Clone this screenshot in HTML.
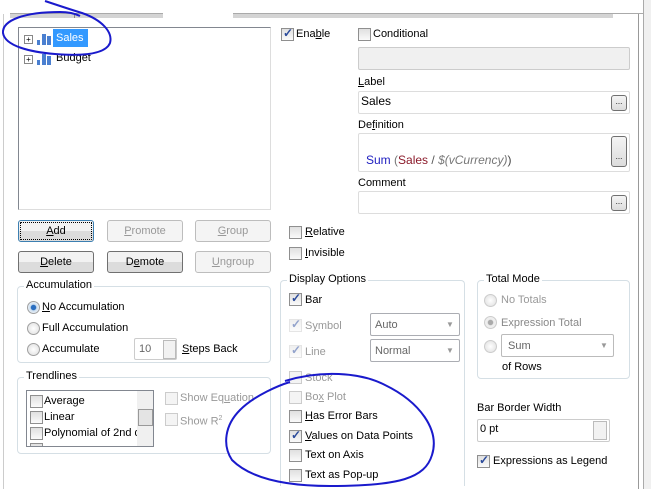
<!DOCTYPE html><html><head><style>
html,body{margin:0;width:651px;height:489px;overflow:hidden}
body{background:#fff;position:relative;font-family:"Liberation Sans",sans-serif;font-size:11px;color:#000}
.a{position:absolute}
.t{position:absolute;white-space:nowrap;line-height:16px}
.cb{position:absolute;width:11px;height:11px;border:1px solid #8f8f8f;background:linear-gradient(#e0e0e0,#fafafa)}
.ck::after{content:"✓";position:absolute;left:1px;top:-3px;font-size:12px;color:#2a4a9a;font-weight:bold}
.dis{color:#999}
.btn{position:absolute;height:20px;border:1px solid #707070;border-radius:3px;background:linear-gradient(#f2f2f2 50%,#dcdcdc 50%);text-align:center;line-height:20px}
.btn.d{border-color:#bdbdbd;background:#f4f4f4;color:#999}
.grp{position:absolute;border:1px solid #d5dfe5;border-radius:4px}
.gl{position:absolute;top:-8px;left:6px;background:#fff;padding:0 2px}
.inp{position:absolute;border:1px solid #abadb3;border-radius:2px;background:#fff}
.rad{position:absolute;width:11px;height:11px;border-radius:50%;border:1px solid #a0a0a0;background:radial-gradient(#fff,#ddd)}
.dots{position:absolute;width:14px;height:14px;border:1px solid #707070;border-radius:3px;background:linear-gradient(#f4f4f4,#dcdcdc);font-size:8px;text-align:center;line-height:12px}
u{text-decoration:underline}
</style></head><body>
<div class="a" style="left:10px;top:13px;width:153px;height:4px;background:#d4d4d4;border-top:1px solid #aaa"></div>
<div class="a" style="left:74px;top:13px;width:1px;height:5px;background:#888"></div>
<div class="a" style="left:233px;top:13px;width:380px;height:4px;background:#d4d4d4;border-top:1px solid #aaa"></div>
<div class="a" style="left:613px;top:13px;width:30px;height:1px;background:#aaa"></div>
<div class="a" style="left:638px;top:14px;width:1px;height:475px;background:#999"></div>
<div class="a" style="left:643px;top:0;width:1px;height:489px;background:#aaa"></div>
<div class="a" style="left:644px;top:0;width:7px;height:489px;background:#f0f0f0"></div>
<div class="a" style="left:3px;top:14px;width:1px;height:475px;background:#ccc"></div>

<div class="a" style="left:18px;top:27px;width:251px;height:181px;border:1px solid #828790;border-bottom-color:#ddd;border-right-color:#ddd"></div>
<div class="a" style="left:24px;top:35px;width:7px;height:7px;border:1px solid #888;font-size:8px;line-height:7px;text-align:center">+</div>
<div class="a" style="left:24px;top:55px;width:7px;height:7px;border:1px solid #888;font-size:8px;line-height:7px;text-align:center">+</div>
<svg class="a" style="left:36px;top:32px" width="16" height="14"><rect x="1" y="8" width="3" height="5" fill="#4a7fd0"/><rect x="6" y="2" width="4" height="11" fill="#4a7fd0"/><rect x="11" y="4" width="4" height="9" fill="#4a7fd0"/></svg>
<svg class="a" style="left:36px;top:52px" width="16" height="14"><rect x="1" y="8" width="3" height="5" fill="#4a7fd0"/><rect x="6" y="2" width="4" height="11" fill="#4a7fd0"/><rect x="11" y="4" width="4" height="9" fill="#4a7fd0"/></svg>
<div class="t" style="left:53px;top:29px;width:35px;height:18px;background:#3399ff;color:#fff;line-height:18px;padding-left:3px;box-sizing:border-box">Sales</div>
<div class="t" style="left:56px;top:50px">Budget</div>

<div class="btn" style="left:18px;top:220px;width:74px;border:1px solid #3c7fb1;outline:1px dotted #000;outline-offset:-3px"><u>A</u>dd</div>
<div class="btn d" style="left:107px;top:220px;width:74px"><u>P</u>romote</div>
<div class="btn d" style="left:195px;top:220px;width:74px"><u>G</u>roup</div>
<div class="btn" style="left:18px;top:251px;width:74px"><u>D</u>elete</div>
<div class="btn" style="left:107px;top:251px;width:74px">D<u>e</u>mote</div>
<div class="btn d" style="left:195px;top:251px;width:74px"><u>U</u>ngroup</div>

<div class="grp" style="left:17px;top:286px;width:252px;height:75px"><span class="gl">Accumulation</span></div>
<div class="rad" style="left:27px;top:301px;background:radial-gradient(#2a6ec0 30%,#cde 40%,#fff)"></div><div class="t" style="left:42px;top:299px"><u>N</u>o Accumulation</div>
<div class="rad" style="left:27px;top:322px"></div><div class="t" style="left:42px;top:320px">Full Accumulation</div>
<div class="rad" style="left:27px;top:343px"></div><div class="t" style="left:42px;top:341px">Accumulate</div>
<div class="inp" style="left:134px;top:338px;width:41px;height:20px;border-color:#ccc"></div><div class="t dis" style="left:139px;top:341px;color:#666">10</div>
<div class="a" style="left:163px;top:340px;width:11px;height:17px;border:1px solid #bbb;background:#f2f2f2"></div>
<div class="t" style="left:182px;top:341px"><u>S</u>teps Back</div>

<div class="grp" style="left:17px;top:377px;width:252px;height:75px"><span class="gl">Trendlines</span></div>
<div class="a" style="left:26px;top:390px;width:126px;height:55px;border:1px solid #828790;overflow:hidden">
<div class="cb" style="left:3px;top:4px"></div><div class="t" style="left:17px;top:2px">Average</div>
<div class="cb" style="left:3px;top:20px"></div><div class="t" style="left:17px;top:18px">Linear</div>
<div class="cb" style="left:3px;top:36px"></div><div class="t" style="left:17px;top:34px">Polynomial of 2nd d</div>
<div class="cb" style="left:3px;top:52px"></div>
<div class="a" style="left:110px;top:0;width:16px;height:55px;background:#f0f0f0"><div style="position:absolute;left:1px;top:18px;width:13px;height:15px;border:1px solid #999;background:#e4e4e4"></div></div>
</div>
<div class="cb" style="left:165px;top:392px;border-color:#ccc;background:#f4f4f4"></div><div class="t dis" style="left:180px;top:390px">Show Eq<u>u</u>ation</div>
<div class="cb" style="left:165px;top:413px;border-color:#ccc;background:#f4f4f4"></div><div class="t dis" style="left:180px;top:411px">Show R<sup style="font-size:7px">2</sup></div>

<div class="cb ck" style="left:281px;top:28px"></div><div class="t" style="left:296px;top:26px">Ena<u>b</u>le</div>
<div class="cb" style="left:358px;top:28px"></div><div class="t" style="left:373px;top:26px">Conditional</div>
<div class="inp" style="left:358px;top:47px;width:270px;height:21px;background:#f0f0f0;border-color:#ccc"></div>
<div class="t" style="left:358px;top:74px"><u>L</u>abel</div>
<div class="inp" style="left:358px;top:91px;width:270px;height:21px;border-color:#ddd"></div>
<div class="t" style="left:361px;top:93px;font-size:12px">Sales</div>
<div class="dots" style="left:611px;top:95px">...</div>
<div class="t" style="left:358px;top:117px">De<u>f</u>inition</div>
<div class="inp" style="left:358px;top:133px;width:270px;height:37px;border-color:#ddd"></div>
<div class="t" style="left:366px;top:152px;font-size:12px"><span style="color:#2020c0">Sum</span> <span style="color:#777">(</span><span style="color:#8b1a2a">Sales</span> <span style="color:#555">/</span> <i style="color:#777">$(vCurrency)</i><span style="color:#444">)</span></div>
<div class="dots" style="left:611px;top:136px;height:29px;line-height:40px">...</div>
<div class="t" style="left:358px;top:175px">Comment</div>
<div class="inp" style="left:358px;top:191px;width:270px;height:21px;border-color:#ddd"></div>
<div class="dots" style="left:611px;top:195px">...</div>

<div class="cb" style="left:289px;top:226px"></div><div class="t" style="left:305px;top:224px"><u>R</u>elative</div>
<div class="cb" style="left:289px;top:247px"></div><div class="t" style="left:305px;top:245px"><u>I</u>nvisible</div>

<div class="grp" style="left:280px;top:280px;width:183px;height:205px;border-bottom:none;border-radius:4px 4px 0 0"><span class="gl">Display Options</span></div>
<div class="cb ck" style="left:289px;top:293px"></div><div class="t" style="left:305px;top:292px">Bar</div>
<div class="cb ck" style="left:289px;top:319px;border-color:#ccc;opacity:.5"></div><div class="t dis" style="left:305px;top:318px">S<u>y</u>mbol</div>
<div class="inp" style="left:370px;top:313px;width:88px;height:21px"></div><div class="t dis" style="left:375px;top:317px;color:#666">Auto</div><div class="t dis" style="left:446px;top:317px;font-size:8px">▼</div>
<div class="cb ck" style="left:289px;top:345px;border-color:#ccc;opacity:.5"></div><div class="t dis" style="left:305px;top:344px">Line</div>
<div class="inp" style="left:370px;top:339px;width:88px;height:21px"></div><div class="t dis" style="left:375px;top:343px;color:#666">Normal</div><div class="t dis" style="left:446px;top:343px;font-size:8px">▼</div>
<div class="cb" style="left:289px;top:371px;border-color:#ccc;background:#f4f4f4"></div><div class="t dis" style="left:305px;top:370px">Stock</div>
<div class="cb" style="left:289px;top:391px;border-color:#ccc;background:#f4f4f4"></div><div class="t dis" style="left:305px;top:389px">Bo<u>x</u> Plot</div>
<div class="cb" style="left:289px;top:410px"></div><div class="t" style="left:305px;top:408px"><u>H</u>as Error Bars</div>
<div class="cb ck" style="left:289px;top:430px"></div><div class="t" style="left:305px;top:428px"><u>V</u>alues on Data Points</div>
<div class="cb" style="left:289px;top:449px"></div><div class="t" style="left:305px;top:447px">Text on Axis</div>
<div class="cb" style="left:289px;top:469px"></div><div class="t" style="left:305px;top:467px">Text as Pop-up</div>

<div class="grp" style="left:477px;top:280px;width:151px;height:97px"><span class="gl">Total Mode</span></div>
<div class="rad" style="left:484px;top:294px;border-color:#ccc"></div><div class="t dis" style="left:501px;top:292px">No Totals</div>
<div class="rad" style="left:484px;top:316px;border-color:#ccc;background:radial-gradient(#aaa 30%,#eee 40%)"></div><div class="t dis" style="left:501px;top:315px;color:#888">Expression Total</div>
<div class="rad" style="left:484px;top:340px;border-color:#ccc"></div>
<div class="inp" style="left:501px;top:334px;width:111px;height:21px;border-color:#bbb"></div><div class="t dis" style="left:508px;top:338px;color:#666">Sum</div><div class="t dis" style="left:600px;top:338px;font-size:8px">▼</div>
<div class="t" style="left:502px;top:359px">of Rows</div>
<div class="t" style="left:477px;top:400px">Bar Border Width</div>
<div class="inp" style="left:477px;top:419px;width:131px;height:21px;border-color:#ccc"></div><div class="t" style="left:480px;top:421px">0 pt</div>
<div class="a" style="left:593px;top:421px;width:12px;height:17px;border:1px solid #bbb;background:#f2f2f2"></div>
<div class="cb ck" style="left:477px;top:455px"></div><div class="t" style="left:493px;top:453px">Expressions as Legend</div>

<svg class="a" style="left:0;top:0" width="651" height="489">
<path d="M45 1 C60 6 72 10 82 13 C102 20 113 32 110 43 C105 55 80 56 55 54 C30 52 5 46 3 33 C2 20 25 12 60 12 C70 12 76 14 80 16" fill="none" stroke="#1a1acc" stroke-width="2"/>
<path d="M285 381 C320 370 360 372 385 385 C420 402 440 430 432 455 C425 478 400 486 330 486 C285 486 250 478 232 460 C222 445 225 425 240 410 C255 395 280 385 290 382" fill="none" stroke="#1a1acc" stroke-width="2"/>
</svg>
</body></html>
